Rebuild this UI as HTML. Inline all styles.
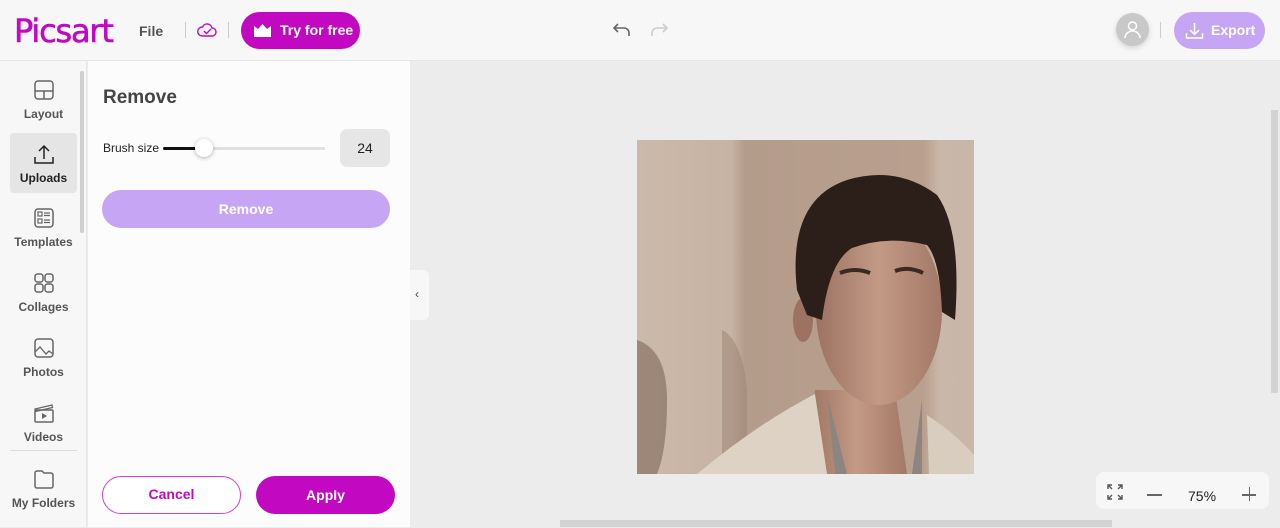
<!DOCTYPE html>
<html><head><meta charset="utf-8"><style>
*{box-sizing:border-box;margin:0;padding:0}
body{width:1280px;height:527px;overflow:hidden;background:#ececec;font-family:"Liberation Sans",Arial,sans-serif;position:relative}
.top{position:absolute;left:0;top:0;width:1280px;height:61px;background:#f7f7f7;border-bottom:1px solid #e6e6e6}
.abs{position:absolute}
.nav{position:absolute;left:0;top:61px;width:87px;height:466px;background:#f7f7f7;border-right:1px solid #e8e8e8}
.item{position:absolute;left:10px;width:67px;height:60px;text-align:center;font-size:12px;color:#555;font-weight:bold}
.item svg{display:block;margin:0 auto 6px}
.panel{position:absolute;left:88px;top:61px;width:322px;height:466px;background:#fcfcfc}
</style></head><body>
<div class="top">
  <div class="abs" style="left:14px;top:12px;font-size:32px;color:#c209c1;font-family:'DejaVu Sans','Liberation Sans',sans-serif;letter-spacing:-1.2px;-webkit-text-stroke:0.6px #c209c1">Picsart</div>
  <div class="abs" style="left:139px;top:23px;font-size:14px;font-weight:bold;color:#555">File</div>
  <div class="abs" style="left:185px;top:22px;width:1px;height:16px;background:#ccc"></div>
  <svg class="abs" style="left:197px;top:22px" width="20" height="16" viewBox="0 0 20 16"><path d="M5 14h10a4 4 0 0 0 0-8 5 5 0 0 0-9.5-1A4.5 4.5 0 0 0 5 14z" fill="none" stroke="#c209c1" stroke-width="1.4"/><path d="M7 9l2.5 2.5L14 7" fill="none" stroke="#c209c1" stroke-width="1.4"/></svg>
  <div class="abs" style="left:228px;top:22px;width:1px;height:16px;background:#ccc"></div>
  <div class="abs" style="left:241px;top:12px;width:119px;height:37px;border-radius:19px;background:#c209c1;color:#fff;font-size:14px;font-weight:bold;line-height:37px;padding-left:39px">Try for free</div>
  <svg class="abs" style="left:254px;top:24px" width="17" height="13" viewBox="0 0 17 13"><path d="M0 2l4 3 4.5-5L13 5l4-3v11H0z" fill="#fff"/></svg>
  <svg class="abs" style="left:612px;top:21px" width="20" height="18" viewBox="0 0 20 18"><path d="M6 3L2 7l4 4M2 7h10a5 5 0 0 1 5 5v3" fill="none" stroke="#666" stroke-width="1.6"/></svg>
  <svg class="abs" style="left:649px;top:21px" width="20" height="18" viewBox="0 0 20 18"><path d="M14 3l4 4-4 4M18 7H8a5 5 0 0 0-5 5v3" fill="none" stroke="#ccc" stroke-width="1.6"/></svg>
  <div class="abs" style="left:1116px;top:13px;width:33px;height:33px;border-radius:50%;background:#c8c8c8;box-shadow:0 2px 6px rgba(0,0,0,.15)"></div>
  <svg class="abs" style="left:1122px;top:19px" width="21" height="21" viewBox="0 0 21 21"><circle cx="10.5" cy="7" r="4" fill="none" stroke="#fff" stroke-width="1.5"/><path d="M3 19a7.5 7 0 0 1 15 0" fill="none" stroke="#fff" stroke-width="1.5"/></svg>
  <div class="abs" style="left:1160px;top:22px;width:1px;height:16px;background:#ccc"></div>
  <div class="abs" style="left:1174px;top:12px;width:91px;height:37px;border-radius:19px;background:#c6a6f4;color:#fff;font-size:14px;font-weight:bold;line-height:37px;padding-left:37px">Export</div>
  <svg class="abs" style="left:1185px;top:21px" width="19" height="19" viewBox="0 0 19 19"><path d="M9.5 2v11M5 9l4.5 4.5L14 9M1.5 12v5h16v-5" fill="none" stroke="#fff" stroke-width="1.5"/></svg>
</div>
<div class="nav">
  <div class="abs" style="left:80px;top:10px;width:4px;height:162px;background:#d0d0d0;border-radius:2px"></div>
  <div class="item" style="top:18px"><svg width="22" height="22" viewBox="0 0 22 22"><rect x="2" y="2" width="18" height="18" rx="3" fill="none" stroke="#666" stroke-width="1.5"/><path d="M2 12h18M11 12v8" stroke="#666" stroke-width="1.5"/></svg>Layout</div>
  <div class="item" style="top:72px;height:60px;background:#e5e5e5;border-radius:4px;color:#222;padding-top:10px"><svg width="22" height="22" viewBox="0 0 22 22"><path d="M11 16V3M6 8l5-5 5 5M2 14v6h18v-6" fill="none" stroke="#222" stroke-width="1.5"/></svg>Uploads</div>
  <div class="item" style="top:146px"><svg width="22" height="22" viewBox="0 0 22 22"><rect x="2" y="2" width="18" height="18" rx="3" fill="none" stroke="#666" stroke-width="1.5"/><rect x="5" y="5" width="4" height="4" fill="none" stroke="#666" stroke-width="1.2"/><rect x="5" y="12" width="4" height="4" fill="none" stroke="#666" stroke-width="1.2"/><path d="M11 6h6M11 8.5h6M11 13h6M11 15.5h6" stroke="#666" stroke-width="1.2"/></svg>Templates</div>
  <div class="item" style="top:211px"><svg width="22" height="22" viewBox="0 0 22 22"><rect x="2" y="2" width="8" height="8" rx="2.5" fill="none" stroke="#666" stroke-width="1.5"/><rect x="12" y="2" width="8" height="8" rx="2.5" fill="none" stroke="#666" stroke-width="1.5"/><rect x="2" y="12" width="8" height="8" rx="2.5" fill="none" stroke="#666" stroke-width="1.5"/><rect x="12" y="12" width="8" height="8" rx="2.5" fill="none" stroke="#666" stroke-width="1.5"/></svg>Collages</div>
  <div class="item" style="top:276px"><svg width="22" height="22" viewBox="0 0 22 22"><rect x="2" y="2" width="18" height="18" rx="3" fill="none" stroke="#666" stroke-width="1.5"/><path d="M2 15l5-5 6 7 3-3 4 3" fill="none" stroke="#666" stroke-width="1.3"/></svg>Photos</div>
  <div class="item" style="top:341px"><svg width="22" height="22" viewBox="0 0 22 22"><rect x="2" y="8" width="18" height="12" rx="1" fill="none" stroke="#666" stroke-width="1.5"/><path d="M2 7l17-4 .5 2.5L2.5 9.5z" fill="none" stroke="#666" stroke-width="1.3"/><path d="M9 11v6l5-3z" fill="#666"/></svg>Videos</div>
  <div class="abs" style="left:10px;top:389px;width:67px;height:1px;background:#ddd"></div>
  <div class="item" style="top:407px"><svg width="22" height="22" viewBox="0 0 22 22"><path d="M2 5a2 2 0 0 1 2-2h5l2 2h7a2 2 0 0 1 2 2v11a2 2 0 0 1-2 2H4a2 2 0 0 1-2-2z" fill="none" stroke="#666" stroke-width="1.5"/></svg>My Folders</div>
</div>
<div class="panel">
  <div class="abs" style="left:15px;top:26px;font-size:19px;font-weight:bold;color:#444">Remove</div>
  <div class="abs" style="left:15px;top:80px;font-size:12px;color:#222">Brush size</div>
  <div class="abs" style="left:75px;top:86px;width:162px;height:3px;background:#e0e0e0;border-radius:2px"></div>
  <div class="abs" style="left:75px;top:86px;width:40px;height:3px;background:#111;border-radius:2px"></div>
  <div class="abs" style="left:107px;top:78px;width:18px;height:18px;border-radius:50%;background:#fff;box-shadow:0 1px 4px rgba(0,0,0,.3)"></div>
  <div class="abs" style="left:252px;top:68px;width:50px;height:38px;border-radius:7px;background:#e6e6e6;font-size:14px;text-align:center;line-height:38px;color:#222">24</div>
  <div class="abs" style="left:14px;top:129px;width:288px;height:38px;border-radius:19px;background:#c6a6f4;color:#fff;font-size:14px;font-weight:bold;text-align:center;line-height:38px">Remove</div>
  <div class="abs" style="left:14px;top:415px;width:139px;height:38px;border-radius:19px;border:1.5px solid #d440d4;color:#c209c1;font-size:14px;font-weight:bold;text-align:center;line-height:35px;background:#fff">Cancel</div>
  <div class="abs" style="left:168px;top:415px;width:139px;height:38px;border-radius:19px;background:#c209c1;color:#fff;font-size:14px;font-weight:bold;text-align:center;line-height:38px">Apply</div>
</div>
<div class="abs" style="left:410px;top:270px;width:19px;height:50px;background:#f7f7f7;border-radius:0 6px 6px 0"></div>
<div class="abs" style="left:415px;top:287px;font-size:12px;color:#444">‹</div>
<svg class="abs" style="left:637px;top:140px" width="337" height="334" viewBox="0 0 337 334">
  <defs><linearGradient id="bg" x1="0" x2="1"><stop offset="0" stop-color="#cbb9aa"/><stop offset=".28" stop-color="#c7b3a3"/><stop offset=".32" stop-color="#b49c8b"/><stop offset=".85" stop-color="#b99f8e"/><stop offset=".9" stop-color="#c9b8a9"/><stop offset="1" stop-color="#c8b6a7"/></linearGradient>
  <linearGradient id="sk" x1="0" x2="1"><stop offset="0" stop-color="#9c7262"/><stop offset=".5" stop-color="#c39a86"/><stop offset="1" stop-color="#a27866"/></linearGradient></defs>
  <rect width="337" height="334" fill="url(#bg)"/>
  <path d="M0 200q30 10 30 60t-10 74H0z" fill="#7d6658" opacity=".6"/>
  <path d="M85 190q20 10 25 60v84H85z" fill="#9b8272" opacity=".5"/>
  <path d="M178 250h80l12 84h-100z" fill="url(#sk)"/>
  <ellipse cx="166" cy="180" rx="10" ry="22" fill="#9c7262"/>
  <ellipse cx="242" cy="170" rx="63" ry="95" fill="url(#sk)"/>
  <path d="M160 150Q150 60 210 40Q260 25 300 55Q325 90 318 180L305 172Q303 120 290 105Q250 95 215 108Q192 122 185 180L170 175Z" fill="#2c1e18"/>
  <path d="M203 133q15-6 30 0M258 131q14-5 28 2" stroke="#3a2a22" stroke-width="4" fill="none"/>
  <path d="M60 334q60-50 118-80l12 80z" fill="#ddd2c4"/>
  <path d="M290 275q30 20 47 40v19h-45z" fill="#d8cdbf"/>
  <path d="M190 255l20 79h-12z M285 260l-10 74h10z" fill="#8e8580"/>
</svg>
<div class="abs" style="left:1270px;top:61px;width:10px;height:459px;background:#ececec"></div>
<div class="abs" style="left:1271px;top:110px;width:7px;height:283px;background:#d3d3d3"></div>
<div class="abs" style="left:410px;top:518px;width:870px;height:9px;background:#ececec"></div>
<div class="abs" style="left:560px;top:520px;width:552px;height:7px;background:#d3d3d3"></div>
<div class="abs" style="left:1096px;top:472px;width:173px;height:37px;border-radius:8px;background:#f7f7f7"></div>
<svg class="abs" style="left:1107px;top:484px" width="16" height="16" viewBox="0 0 16 16"><path d="M1 5V1h4M1 1l4 4M11 1h4v4M15 1l-4 4M1 11v4h4M1 15l4-4M15 11v4h-4M15 15l-4-4" fill="none" stroke="#555" stroke-width="1.4"/></svg>
<div class="abs" style="left:1147px;top:494px;width:15px;height:1.5px;background:#666"></div>
<div class="abs" style="left:1188px;top:488px;font-size:14px;color:#222">75%</div>
<div class="abs" style="left:1242px;top:494px;width:14px;height:1.5px;background:#666"></div>
<div class="abs" style="left:1248.5px;top:487px;width:1.5px;height:14px;background:#666"></div>
</body></html>
